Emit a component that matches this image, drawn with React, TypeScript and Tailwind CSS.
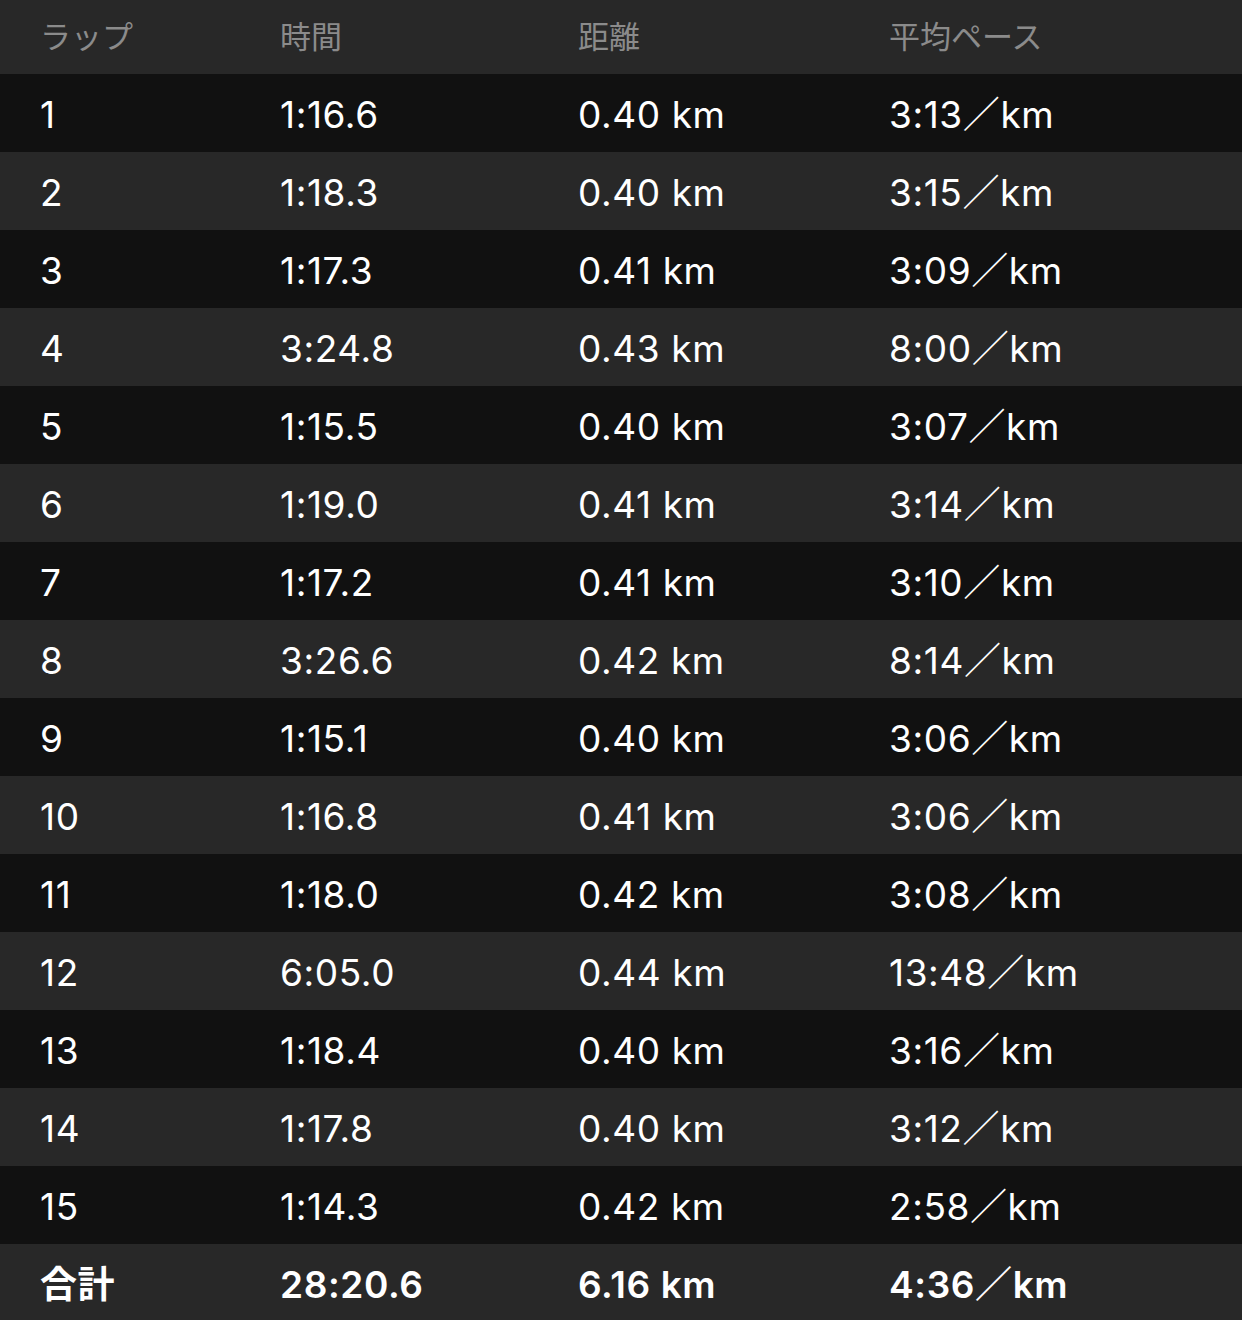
import React from "react";

const rows: [string, string, string, string][] = [
  ["1", "1:16.6", "0.40 km", "3:13／km"],
  ["2", "1:18.3", "0.40 km", "3:15／km"],
  ["3", "1:17.3", "0.41 km", "3:09／km"],
  ["4", "3:24.8", "0.43 km", "8:00／km"],
  ["5", "1:15.5", "0.40 km", "3:07／km"],
  ["6", "1:19.0", "0.41 km", "3:14／km"],
  ["7", "1:17.2", "0.41 km", "3:10／km"],
  ["8", "3:26.6", "0.42 km", "8:14／km"],
  ["9", "1:15.1", "0.40 km", "3:06／km"],
  ["10", "1:16.8", "0.41 km", "3:06／km"],
  ["11", "1:18.0", "0.42 km", "3:08／km"],
  ["12", "6:05.0", "0.44 km", "13:48／km"],
  ["13", "1:18.4", "0.40 km", "3:16／km"],
  ["14", "1:17.8", "0.40 km", "3:12／km"],
  ["15", "1:14.3", "0.42 km", "2:58／km"],
];

const font = { fontFamily: 'Inter, "Noto Sans CJK JP", sans-serif' };
const grid = "grid grid-cols-[240px_298px_311px_1fr] pl-10 items-center";

export default function App() {
  return (
    <div className="w-[1242px] h-[1320px] bg-[#111111] overflow-hidden" style={font}>
      <div className={`${grid} h-[74px] bg-[#282828] text-[#8b8b8b] text-[31px]`}>
        <div>ラップ</div>
        <div>時間</div>
        <div>距離</div>
        <div>平均ペース</div>
      </div>
      {rows.map((r, i) => (
        <div
          key={i}
          className={`${grid} h-[78px] pt-1 text-white text-[37px] tracking-[0.6px] ${i % 2 === 0 ? "bg-[#111111]" : "bg-[#282828]"}`}
        >
          <div>{r[0]}</div>
          <div>{r[1]}</div>
          <div>{r[2]}</div>
          <div>{r[3]}</div>
        </div>
      ))}
      <div className={`${grid} h-[78px] pt-1 text-white text-[37px] tracking-[0.6px] font-semibold bg-[#282828]`}>
        <div>合計</div>
        <div>28:20.6</div>
        <div>6.16 km</div>
        <div>4:36／km</div>
      </div>
    </div>
  );
}
